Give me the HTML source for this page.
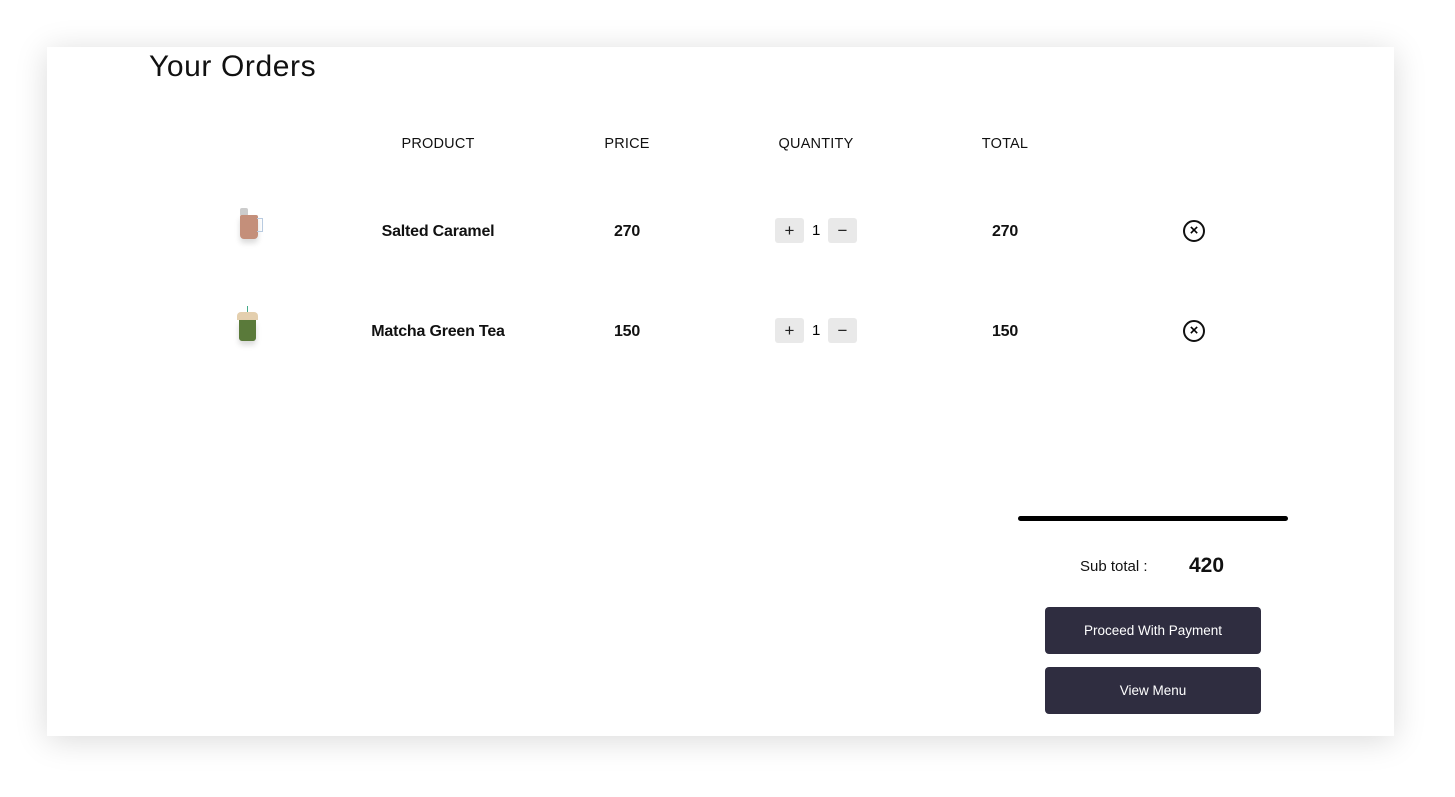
<!DOCTYPE html>
<html><head><style>
body{margin:0;width:1455px;height:797px;background:#fff;font-family:"Liberation Sans",sans-serif;position:relative;overflow:hidden}
.card{position:absolute;left:47px;top:47px;width:1347px;height:689px;background:#fff;box-shadow:0 4px 30px rgba(0,0,0,0.15)}
.a{position:absolute;white-space:nowrap}
.h{font-size:14.5px;color:#111;transform:translateX(-50%);top:136px;letter-spacing:0.2px}
.n{font-size:16px;font-weight:bold;color:#111;transform:translateX(-50%);letter-spacing:-0.2px}
.btnq{position:absolute;width:29px;height:25px;background:#e9e9e9;border-radius:3px;text-align:center;line-height:25px;font-size:17px;color:#222}
.x{position:absolute;width:18px;height:18px;border:2px solid #111;border-radius:50%;text-align:center;line-height:18px;font-size:15px;font-weight:bold}
.b{position:absolute;left:1045px;width:216px;height:47px;background:#2f2d40;border-radius:4px;color:#fff;font-size:13.5px;text-align:center;line-height:47px}
</style></head><body>
<div class="card"></div>
<div class="a" style="left:149px;top:50px;font-size:30px;color:#111;letter-spacing:0.6px">Your Orders</div>
<div class="a h" style="left:438px">PRODUCT</div>
<div class="a h" style="left:627px">PRICE</div>
<div class="a h" style="left:816px">QUANTITY</div>
<div class="a h" style="left:1005px">TOTAL</div>

<div class="a" style="left:240px;top:208px;width:8px;height:8px;background:#ccc;border-radius:2px"></div>
<div class="a" style="left:240px;top:215px;width:18px;height:24px;background:#c48f7a;border-radius:2px 2px 4px 4px;box-shadow:0 4px 6px rgba(0,0,0,0.15)"></div>
<div class="a" style="left:257px;top:218px;width:5px;height:12px;border:1px solid #b9cbe0;border-left:none"></div>
<div class="a n" style="left:438px;top:223px">Salted Caramel</div>
<div class="a n" style="left:627px;top:223px">270</div>
<div class="btnq" style="left:775px;top:218px">+</div>
<div class="a" style="left:812px;top:222px;font-size:15px">1</div>
<div class="btnq" style="left:828px;top:218px">−</div>
<div class="a n" style="left:1005px;top:223px">270</div>
<div class="x" style="left:1183px;top:220px">×</div>

<div class="a" style="left:247px;top:306px;width:1px;height:8px;background:#4a8"></div>
<div class="a" style="left:237px;top:312px;width:21px;height:8px;background:#e4cfae;border-radius:4px 4px 0 0"></div>
<div class="a" style="left:239px;top:320px;width:17px;height:21px;background:#5a7a3a;border-radius:0 0 3px 3px;box-shadow:0 4px 6px rgba(0,0,0,0.15)"></div>
<div class="a n" style="left:438px;top:323px">Matcha Green Tea</div>
<div class="a n" style="left:627px;top:323px">150</div>
<div class="btnq" style="left:775px;top:318px">+</div>
<div class="a" style="left:812px;top:322px;font-size:15px">1</div>
<div class="btnq" style="left:828px;top:318px">−</div>
<div class="a n" style="left:1005px;top:323px">150</div>
<div class="x" style="left:1183px;top:320px">×</div>

<div class="a" style="left:1018px;top:516px;width:270px;height:5px;background:#000;border-radius:3px"></div>
<div class="a" style="left:1080px;top:558px;font-size:15px;color:#111">Sub total :</div>
<div class="a" style="left:1189px;top:554px;font-size:21px;font-weight:bold;color:#111">420</div>
<div class="b" style="top:607px">Proceed With Payment</div>
<div class="b" style="top:667px">View Menu</div>
</body></html>
